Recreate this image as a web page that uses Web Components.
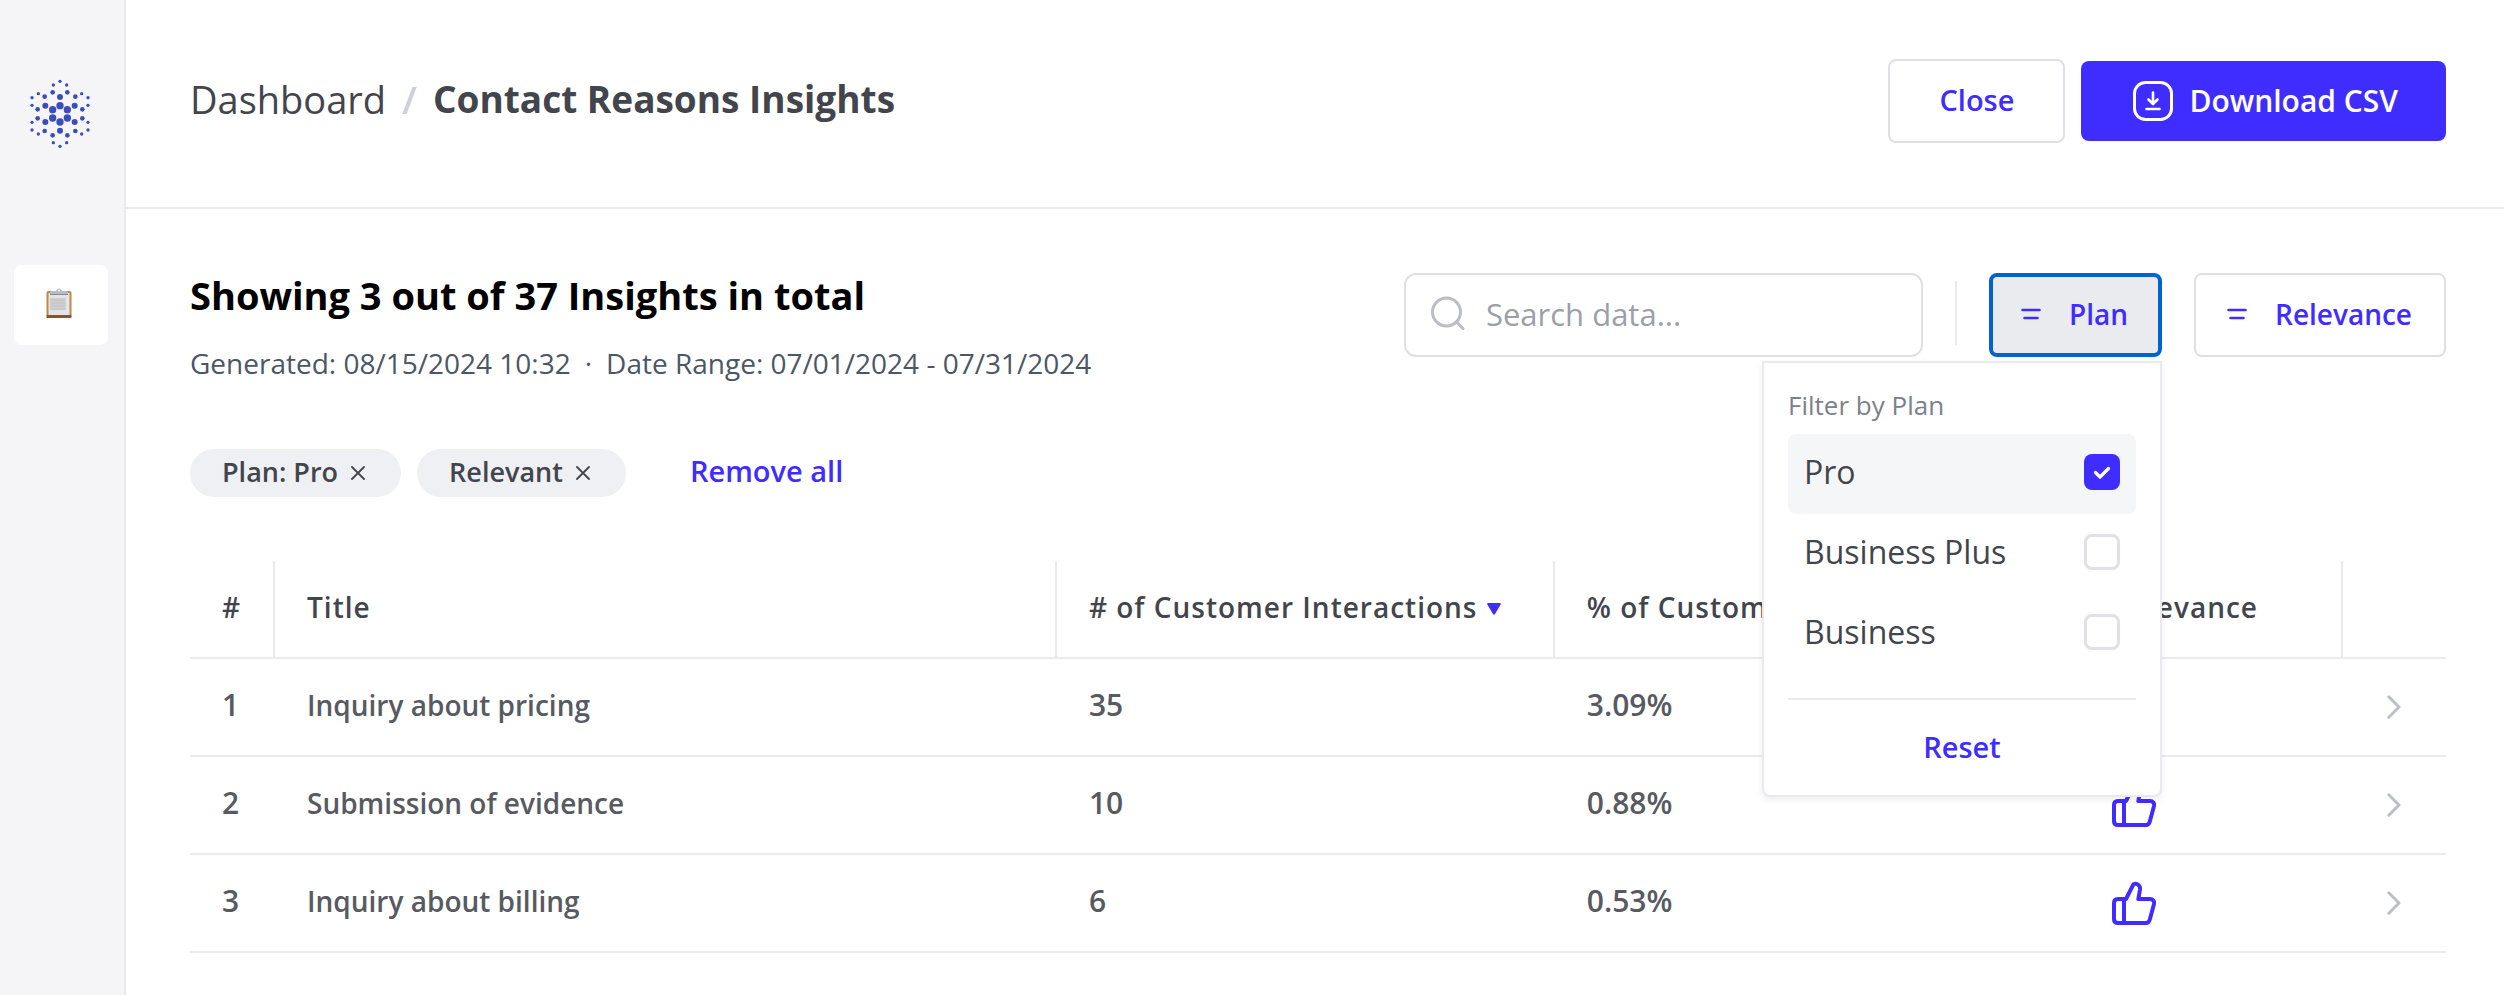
<!DOCTYPE html>
<html lang="en">
<head>
<meta charset="utf-8">
<meta name="viewport" content="width=device-width, initial-scale=1">
<title>Contact Reasons Insights</title>
<style>
  :root {
    --brand: #3f2dff;
    --line: #e9e9ef;
    --control-line: #dfdfe6;
    --ink: #43454d;
    --ink-soft: #585a62;
    --muted: #9c9fa8;
  }
  body {
    margin: 0;
    background: #fff;
    color: var(--ink);
    font-family: "Open Sans", "Noto Sans", sans-serif;
    font-size: 28px;
  }
</style>
</head>
<body>
<app-shell>
  <side-nav slot="nav"></side-nav>
  <page-header slot="header">
    <a slot="parent" href="#dashboard">Dashboard</a>
    <span slot="current">Contact Reasons Insights</span>
    <ui-button slot="actions">Close</ui-button>
    <ui-button slot="actions" variant="primary" icon="download">Download CSV</ui-button>
  </page-header>
  <insights-toolbar>
    <span slot="title">Showing 3 out of 37 Insights in total</span>
    <span slot="meta">Generated: 08/15/2024 10:32</span>
    <span slot="meta">·</span>
    <span slot="meta">Date Range: 07/01/2024 - 07/31/2024</span>
    <search-field slot="tools"></search-field>
    <plan-filter slot="filters"></plan-filter>
    <ui-button slot="filters" variant="filter" icon="filter">Relevance</ui-button>
  </insights-toolbar>
  <filter-chips>
    <filter-chip>Plan: Pro</filter-chip>
    <filter-chip>Relevant</filter-chip>
  </filter-chips>
  <insights-table></insights-table>
</app-shell>

<script>
const ICONS = {
  download: `<svg width="40" height="40" viewBox="0 0 40 40" fill="none" stroke="currentColor" stroke-width="3" stroke-linecap="round" stroke-linejoin="round" aria-hidden="true"><rect x="1.5" y="1.5" width="37" height="37" rx="11"/><path d="M20 11.500v11M15.500 18.500 20 23l4.500-4.500M13.500 28h13" stroke-width="2.600"/></svg>`,
  filter: `<svg width="20" height="14" viewBox="0 0 20 14" fill="none" stroke="currentColor" stroke-width="2.600" stroke-linecap="round" aria-hidden="true"><path d="M1.500 3h17M3.500 11h13"/></svg>`,
  thumb: `<svg width="44" height="44" viewBox="0 0 44 44" fill="none" stroke="#3f2dff" stroke-width="4" stroke-linejoin="round" role="img" aria-label="Relevant"><path d="M12 18v24M6 18h8L21.500 3.200C25 1.500 28.500 4.500 28 8.500L26.300 18H38c3 0 4.600 2.200 4 5l-4.200 15.500c-.6 2.300-1.800 3.500-3.800 3.500H6c-2.500 0-4-1.500-4-4V22c0-2.500 1.500-4 4-4z"/></svg>`,
  chevron: `<svg width="14" height="24" viewBox="0 0 14 24" fill="none" stroke="#bdbfc8" stroke-width="3" stroke-linecap="round" stroke-linejoin="round" aria-hidden="true"><path d="M1.800 1.800 12 12 1.800 22.200"/></svg>`,
  close: `<svg width="14" height="14" viewBox="0 0 14 14" fill="none" stroke="#43454d" stroke-width="1.800" stroke-linecap="round" aria-hidden="true"><path d="M1 1l12 12M13 1 1 13"/></svg>`
};

const BASE = `:host,*,*::before,*::after{box-sizing:border-box}button{font:inherit;cursor:pointer;margin:0}svg{display:block;flex:none}`;

class BaseElement extends HTMLElement {
  constructor() {
    super();
    this.attachShadow({ mode: 'open' });
  }
  connectedCallback() {
    const t = document.createElement('template');
    t.innerHTML = `<style>${BASE}${this.css()}</style>${this.html()}`;
    this.shadowRoot.replaceChildren(t.content.cloneNode(true));
  }
}

customElements.define('app-shell', class extends BaseElement {
  css() { return `
    :host{display:grid;grid-template-columns:126px minmax(0,1fr);min-height:100vh}
    .page{min-width:0}
    main{padding:64px 58px 40px 64px}`; }
  html() { return `<slot name="nav"></slot><div class="page"><slot name="header"></slot><main><slot></slot></main></div>`; }
});

customElements.define('side-nav', class extends BaseElement {
  css() { return `
    :host{display:block;background:#f5f5f8;border-right:2px solid var(--line)}
    nav{display:flex;flex-direction:column;align-items:center;gap:116px;padding:79px 2px 0 0}
    .item{display:grid;place-items:center;width:94px;height:80px;border-radius:8px;background:#fff}`; }
  html() {
    const half = [[180,94,5],[160,105,5],[200,105,5],[158,127,7],[202,127,7],[115,131,5],[245,131,5],[134,140,7],[226,140,7],[180,141,9],[96,143,5],[264,143,5],[96,166,5],[264,166,5],[136,167,9],[224,167,9],[180,167,11],[113,178,7],[247,178,7],[158,179,11],[202,179,11]];
    const dots = half.flatMap(([x, y, r]) => [[x, y, r], [x, 383 - y, r]])
      .map(([x, y, r]) => `<circle cx="${x}" cy="${y}" r="${r}"/>`).join('');
    return `<nav aria-label="Main">
      <svg width="62" height="70" viewBox="90 87 186 210" fill="#3d4cbc" role="img" aria-label="Home">${dots}</svg>
      <a class="item" href="#reports" aria-label="Reports">
        <svg width="30" height="34" viewBox="0 0 30 34" aria-hidden="true">
          <rect x="0.500" y="3" width="25" height="27" rx="2" fill="#bd8a4b"/>
          <rect x="0.500" y="27" width="25" height="3" rx="1" fill="#8a5520"/>
          <rect x="2.500" y="5" width="21" height="22" fill="#e4e4e6"/>
          <rect x="4" y="10" width="16" height="12" fill="#cfcfd0"/>
          <path d="M5 12h14M5 15h14M5 18h14M5 21h14" stroke="#c2c2c4"/>
          <path d="M4 7V4.500C4 3.500 5 3 6 3h4c.5-1.500 1.500-2.500 3-2.500S15.500 1.500 16 3h4c1 0 2 .5 2 1.500V7z" fill="#b4bcc4"/>
          <path d="M4 6.500h18" stroke="#85888c"/>
          <circle cx="13" cy="2.500" r="1" fill="#f5f6f9"/>
        </svg>
      </a></nav>`;
  }
});

customElements.define('page-header', class extends BaseElement {
  css() { return `
    :host{display:flex;align-items:center;justify-content:space-between;gap:32px;padding:59px 58px 64px 64px;border-bottom:2px solid var(--line)}
    nav{display:flex;gap:16px;padding-bottom:4px;font-size:38px;line-height:52px;white-space:nowrap}
    .sep{color:#cdd0d8;font-weight:600}
    h1{margin:0;font-size:37px;font-weight:700;line-height:52px}
    .actions{display:flex;align-items:center;gap:16px}
    ::slotted(a){color:inherit;text-decoration:none}`; }
  html() { return `<nav aria-label="Breadcrumb"><slot name="parent"></slot><span class="sep">/</span><h1><slot name="current"></slot></h1></nav><div class="actions"><slot name="actions"></slot></div>`; }
});

customElements.define('ui-button', class extends BaseElement {
  css() { return `
    :host{display:block}
    button{display:flex;align-items:center;gap:16px;height:84px;padding:0 49px 2px;border:2px solid var(--control-line);border-radius:8px;background:#fff;color:var(--brand);font-size:29px;font-weight:600;line-height:40px;white-space:nowrap}
    button.primary{height:80px;padding:0 48px 0 52px;border:0;background:var(--brand);color:#fff;font-size:30px}
    button.filter{gap:28px;padding:0 32px 2px 31px;font-size:28px}
    button.pressed{padding:0 30px 2px 28px;border:4px solid #0063d1;background:#eaebef}`; }
  html() {
    const pressed = this.hasAttribute('pressed');
    return `<button type="button" class="${this.getAttribute('variant') || ''}${pressed ? ' pressed' : ''}"${pressed ? ' aria-expanded="true"' : ''}>${ICONS[this.getAttribute('icon')] || ''}<span><slot></slot></span></button>`;
  }
});

customElements.define('insights-toolbar', class extends BaseElement {
  css() { return `
    :host{display:flex;justify-content:space-between;align-items:flex-start;gap:32px;margin-bottom:66px}
    h2{margin:0 0 26px;color:#000;font-size:38px;font-weight:700;line-height:44px}
    .meta{display:flex;gap:14px;color:#4c5666;line-height:40px}
    .tools{display:flex;align-items:center;gap:32px}
    .rule{width:2px;height:64px;margin-bottom:4px;background:var(--line)}`; }
  html() { return `<div><h2><slot name="title"></slot></h2><div class="meta"><slot name="meta"></slot></div></div>
    <div class="tools"><slot name="tools"></slot><span class="rule"></span><slot name="filters"></slot></div>`; }
});

customElements.define('search-field', class extends BaseElement {
  css() { return `
    :host{display:block}
    label{display:flex;align-items:center;gap:20px;width:519px;height:84px;padding:0 24px 2px;border:2px solid var(--control-line);border-radius:12px;background:#fff}
    input{flex:1;min-width:0;padding:0;border:0;outline:0;background:none;color:var(--ink);font:inherit;font-size:31px;line-height:40px}
    input::placeholder{color:var(--muted);opacity:1}`; }
  html() { return `<label><svg width="36" height="36" viewBox="0 0 36 36" fill="none" stroke="#bbbdc7" stroke-width="3" stroke-linecap="round" aria-hidden="true"><circle cx="16.500" cy="16" r="14"/><path d="M27 26.500l6 6"/></svg><input type="search" placeholder="Search data..." aria-label="Search data"></label>`; }
});

customElements.define('plan-filter', class extends BaseElement {
  css() { return `
    :host{display:block;position:relative}
    .menu{position:absolute;z-index:1;top:88px;right:0;width:400px;padding:24px 24px 0;border:2px solid var(--line);border-radius:0 0 8px 8px;background:#fff;box-shadow:0 3px 6px rgba(40,40,70,.08)}
    fieldset{min-width:0;margin:0;padding:0 0 24px;border:0;border-bottom:2px solid var(--line)}
    legend{padding:0 0 11px;color:#7d808a;font-size:26px;line-height:36px}
    label{display:flex;align-items:center;justify-content:space-between;height:80px;padding:0 16px 4px;border-radius:8px;font-size:32px;line-height:36px}
    label:has(:checked){background:#f5f6f8}
    input{appearance:none;width:36px;height:36px;margin:0;border:3px solid #e0e0e7;border-radius:8px;background:#fff}
    input:checked{border:0;background:var(--brand) url("data:image/svg+xml,%3Csvg xmlns='http://www.w3.org/2000/svg' viewBox='0 0 36 36' fill='none' stroke='white' stroke-width='3.2' stroke-linecap='round' stroke-linejoin='round'%3E%3Cpath d='M11.500 18.500l4.500 4.500 8.500-8.500'/%3E%3C/svg%3E")}
    .reset{display:block;width:100%;height:95px;padding:0 0 2px;border:0;background:none;color:var(--brand);font-size:29px;font-weight:600}`; }
  html() { return `<ui-button variant="filter" icon="filter" pressed>Plan</ui-button>
    <div class="menu"><fieldset><legend>Filter by Plan</legend>
    ${['Pro', 'Business Plus', 'Business'].map((n, i) => `<label><span>${n}</span><input type="checkbox"${i ? '' : ' checked'}></label>`).join('')}
    </fieldset><button type="button" class="reset">Reset</button></div>`; }
});

customElements.define('filter-chips', class extends BaseElement {
  css() { return `
    :host{display:flex;align-items:center;gap:16px;margin-bottom:64px}
    .all{height:48px;margin-left:48px;padding:0 0 4px;border:0;background:none;color:var(--brand);font-size:29px;font-weight:600;line-height:40px}`; }
  html() { return `<slot></slot><button type="button" class="all">Remove all</button>`; }
});

customElements.define('filter-chip', class extends BaseElement {
  css() { return `
    :host{display:flex;align-items:center;gap:13px;height:48px;padding:0 36px 2px 32px;border-radius:24px;background:#eff0f4;font-size:27px;font-weight:600;line-height:40px;white-space:nowrap}
    button{padding:2px 0 0;border:0;background:none}`; }
  html() { return `<span><slot></slot></span><button type="button" aria-label="Remove filter">${ICONS.close}</button>`; }
});

customElements.define('insights-table', class extends BaseElement {
  css() { return `
    :host{display:block}
    table{width:100%;table-layout:fixed;border-collapse:separate;border-spacing:0;text-align:left}
    th,td{height:98px;padding:0 0 4px 32px;border-bottom:2px solid var(--line);font-weight:600;line-height:40px;white-space:nowrap}
    th{letter-spacing:1px}
    th:not(:last-child){border-right:2px solid var(--line)}
    td{color:var(--ink-soft)}
    .num{font-size:30px}
    .n{width:85px}.title{width:34.66%}.count{width:22.07%}.rel{width:263px}.go{width:103px}
    td:last-child{padding:0 0 0 44px}
    td:nth-last-child(2){padding-bottom:0}
    .sort{display:flex;align-items:center;gap:10px}
    .sort svg{margin-top:4px}`; }
  html() {
    const rows = [['Inquiry about pricing', '35', '3.09%'], ['Submission of evidence', '10', '0.88%'], ['Inquiry about billing', '6', '0.53%']];
    return `<table><thead><tr><th class="n" scope="col">#</th><th class="title" scope="col">Title</th>
      <th class="count" scope="col" aria-sort="descending"><span class="sort"># of Customer Interactions<svg width="14" height="12" viewBox="0 0 14 12" fill="#3f2dff" aria-hidden="true"><path d="M1 0h12c1 0 1 1 .7 1.600L8 11c-.5 1-1.500 1-2 0L.3 1.600C0 1 0 0 1 0z"/></svg></span></th>
      <th scope="col">% of Customers</th><th class="rel" scope="col">Relevance</th><th class="go" scope="col" aria-label="Details"></th></tr></thead><tbody>
      ${rows.map(([t, c, p], i) => `<tr><td class="num">${i + 1}</td><td>${t}</td><td class="num">${c}</td><td class="num">${p}</td><td>${ICONS.thumb}</td><td>${ICONS.chevron}</td></tr>`).join('')}
      </tbody></table>`;
  }
});
</script>
</body>
</html>
